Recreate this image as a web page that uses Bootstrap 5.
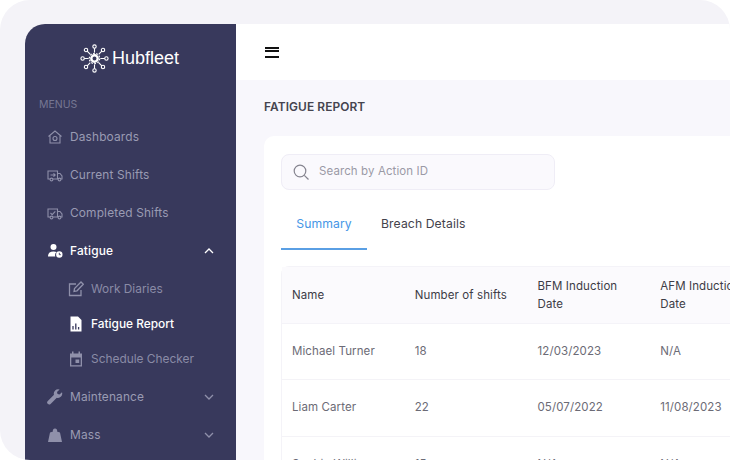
<!DOCTYPE html>
<html lang="en">
<head>
  <meta charset="UTF-8">
  <title>Hubfleet - Fatigue Report</title>
  <meta name="viewport" content="width=device-width, initial-scale=1">
  <link href="https://cdn.jsdelivr.net/npm/bootstrap@5.3.3/dist/css/bootstrap.min.css" rel="stylesheet">
  <style>
    html, body { height: 100%; overflow: hidden; background: #fff; }
    body { font-family: Inter, "Open Sans", sans-serif; }
    .frame-wrap { width: 730px; height: 460px; padding: 24px 0 0 25px; background: #f4f3f8; border-radius: 30px 30px 0 30px; overflow: hidden; }
    .app-shell { height: 600px; width: 705px; }
    .side-panel { width: 211px; flex: none; background: #38395c; border-radius: 20px 0 0 0; }
    .brand-row { height: 64px; padding-left: 55px; color: #fff; font-family: "Liberation Sans", Arial, sans-serif; font-size: 18px; gap: 3px; padding-top: 5px; }
    .menu-head { color: #767793; font-size: 10.5px; padding-left: 14px; height: 30px; line-height: 33px; margin-bottom: 0; }
    .side-link { height: 38px; padding-left: 22px; padding-right: 22px; color: #9a9bb3; font-size: 11.9px; letter-spacing: .15px; text-decoration: none; }
    .side-link svg.ico { width: 16px; height: 16px; margin-right: 7px; flex: none; }
    .side-link.is-open { color: #fff; font-weight: 500; }
    .sub-group { padding: 1px 0 2px; }
    .sub-link { height: 35px; padding-left: 43px; color: #8a8ba6; font-size: 11.9px; letter-spacing: 0; text-decoration: none; }
    .sub-link svg { width: 16px; height: 16px; margin-right: 7px; flex: none; }
    .sub-link.is-current { color: #fff; font-weight: 500; }
    .chev { width: 10px; height: 10px; margin-left: auto; }
    .main-area { flex: 1; min-width: 0; background: #f8f7fc; }
    .top-strip { height: 56px; background: #fff; padding-left: 29px; }
    .burger { width: 14px; height: 11px; border-top: 2px solid #111; border-bottom: 2px solid #111; }
    .burger::after { content: ""; display: block; height: 2px; background: #111; margin-top: 1.5px; }
    .page-body { padding: 0 0 0 28px; }
    .page-title { font-size: 11.9px; font-weight: 600; color: #45444f; height: 56px; line-height: 54px; margin: 0; letter-spacing: .1px; }
    .report-card { background: #fff; border-radius: 10px 0 0 0; padding: 18px 0 0 17px; border: 0; }
    .search-box { width: 274px; height: 36px; background: #faf9fd; border: 1px solid #efedf6; border-radius: 8px; padding-left: 11px; gap: 10px; color: #9a99a6; font-size: 11.5px; letter-spacing: .1px; }
    .tab-strip { height: 60px; }
    .tab-strip .nav-link { padding: 0; height: 60px; line-height: 68px; font-size: 12.2px; color: #43424c; letter-spacing: .1px; }
    .tab-strip .nav-link.active { width: 86px; text-align: center; color: #4596e6; border-bottom: 2px solid #5a9fe4; }
    .tab-strip .second-tab { margin-left: 14px; }
    .report-wrap { margin-top: 16px; width: 500px; border: 1px solid #f4f3f8; border-radius: 8px 0 0 0; }
    .report-table { margin: 0; table-layout: fixed; width: 491px; font-size: 11.5px; letter-spacing: .1px; }
    .report-table th, .report-table td { padding: 0 10px; vertical-align: middle; }
    .report-table th { height: 56px; background: #fbfafd; font-weight: 400; color: #3d3c46; line-height: 18px; border-bottom: 1px solid #f4f3f8; }
    .report-table td { height: 56.5px; color: #6c6b76; border-bottom: 1px solid #f4f3f7; }
  </style>
</head>
<body>
  <div class="frame-wrap">
    <div class="app-shell d-flex">
      <aside class="side-panel">
        <div class="brand-row d-flex align-items-center">
          <svg width="29" height="29" viewBox="0 0 29 29" fill="none" stroke="#fff" stroke-width="1.1">
            <circle cx="14.5" cy="14.5" r="3.2" stroke-width="2.4"/>
            <circle cx="14.5" cy="14.5" r="5.2" stroke-width="1.2" stroke-dasharray="1.8 1.4"/>
            <circle cx="14.5" cy="2.6" r="1.7"/><circle cx="14.5" cy="26.4" r="1.7"/>
            <circle cx="2.6" cy="14.5" r="1.7"/><circle cx="26.4" cy="14.5" r="1.7"/>
            <circle cx="6" cy="6" r="1.7"/><circle cx="23" cy="6" r="1.7"/>
            <circle cx="6" cy="23" r="1.7"/><circle cx="23" cy="23" r="1.7"/>
            <path d="M14.5 4.3V8.6M14.5 20.4V24.7M4.3 14.5H8.6M20.4 14.5H24.7M7.2 7.2L10.3 10.3M21.8 7.2L18.7 10.3M7.2 21.8L10.3 18.7M21.8 21.8L18.7 18.7"/>
          </svg>
          <span>Hubfleet</span>
        </div>
        <div class="menu-head">MENUS</div>

        <a class="side-link d-flex align-items-center" href="#">
          <svg class="ico" viewBox="0 0 16 16" fill="none" stroke="#8f90aa" stroke-width="1.1"><path d="M1.5 7.5L8 2l6.5 5.5M3 6.500V14h10V6.500"/><circle cx="8" cy="9.500" r="2"/></svg>
          Dashboards
        </a>
        <a class="side-link d-flex align-items-center" href="#">
          <svg class="ico" viewBox="0 0 16 16" fill="none" stroke="#8f90aa" stroke-width="1.1"><path d="M3 12H1V4h9.500v8H6M10.500 6.500h2.500l2 2.500v3h-1.200M10.500 12h.5"/><circle cx="4.500" cy="12.500" r="1.400"/><circle cx="12.500" cy="12.500" r="1.400"/><path d="M3.500 8h4.500M6.500 6.300L8.200 8 6.500 9.700"/></svg>
          Current Shifts
        </a>
        <a class="side-link d-flex align-items-center" href="#">
          <svg class="ico" viewBox="0 0 16 16" fill="none" stroke="#8f90aa" stroke-width="1.1"><path d="M3 12H1V4h9.500v8H6M10.500 6.500h2.500l2 2.500v3h-1.200M10.500 12h.5"/><circle cx="4.500" cy="12.500" r="1.400"/><circle cx="12.500" cy="12.500" r="1.400"/><path d="M3.500 8l1.700 1.700L8.300 6.300"/></svg>
          Completed Shifts
        </a>
        <a class="side-link is-open d-flex align-items-center" href="#">
          <svg class="ico" viewBox="0 0 16 16" fill="#fff"><circle cx="6.500" cy="4" r="3"/><path d="M1 13.500c0-3.500 2-5 5.500-5 1.300 0 2.300.2 3.100.6A4 4 0 0 0 8.300 13.500z"/><circle cx="12.300" cy="11.500" r="3.200"/><path d="M12.300 9.800v1.900h1.500" stroke="#38395c" stroke-width=".9" fill="none"/></svg>
          Fatigue
          <svg class="chev" viewBox="0 0 10 10" fill="none" stroke="#fff" stroke-width="1.3"><path d="M1 7l4-4 4 4"/></svg>
        </a>

        <div class="sub-group">
          <a class="sub-link d-flex align-items-center" href="#">
            <svg viewBox="0 0 16 16" fill="none" stroke="#8f90aa" stroke-width="1.3"><path d="M13 9v5.500H1.500V3H8"/><path d="M6 10.500l.5-3L13 1l2.300 2.300L9 9.800z"/></svg>
            Work Diaries
          </a>
          <a class="sub-link is-current d-flex align-items-center" href="#">
            <svg viewBox="0 0 16 16" fill="#fff"><path d="M2.500 .5h7.500L13.500 4v11.500h-11z"/><path d="M5 13.500V10M7.800 13.500V7.500M10.600 13.500v-2.500" stroke="#38395c" stroke-width="1.300"/></svg>
            Fatigue Report
          </a>
          <a class="sub-link d-flex align-items-center" href="#">
            <svg viewBox="0 0 16 16" fill="#8f90aa"><path d="M2 2.500h12v13H2zM3.300 6.500v7.700h9.400V6.500z" fill-rule="evenodd"/><path d="M4 .5h1.500v3H4zM10.500 .5H12v3h-1.500zM7.500 8.500h3.700v3.500H7.500z"/></svg>
            Schedule Checker
          </a>
        </div>

        <a class="side-link d-flex align-items-center" href="#">
          <svg class="ico" viewBox="0 0 16 16" fill="#8f90aa"><path d="M15 3.200l-2.500 2.300-2-.6-.5-2L12.600.5A4.300 4.300 0 0 0 7 5.800L.8 12a2 2 0 0 0 2.800 2.900L9.800 8.700A4.300 4.300 0 0 0 15 3.200z"/></svg>
          Maintenance
          <svg class="chev" viewBox="0 0 10 10" fill="none" stroke="#8f90aa" stroke-width="1.3"><path d="M1 3l4 4 4-4"/></svg>
        </a>
        <a class="side-link d-flex align-items-center" href="#">
          <svg class="ico" viewBox="0 0 16 16" fill="#8f90aa"><path d="M6 4.500A2.200 2.200 0 1 1 10 4.500L13 5.500L15 15H1L3 5.500z"/></svg>
          Mass
          <svg class="chev" viewBox="0 0 10 10" fill="none" stroke="#8f90aa" stroke-width="1.3"><path d="M1 3l4 4 4-4"/></svg>
        </a>
      </aside>

      <main class="main-area">
        <div class="top-strip d-flex align-items-center">
          <div class="burger"></div>
        </div>
        <div class="page-body">
          <h1 class="page-title">FATIGUE REPORT</h1>
          <div class="report-card">
            <div class="search-box d-flex align-items-center">
              <svg width="16" height="16" viewBox="0 0 16 16" fill="none" stroke="#85848f" stroke-width="1.2"><circle cx="7" cy="7" r="5.800"/><path d="M11.300 11.300L15.500 15.500"/></svg>
              <span>Search by Action ID</span>
            </div>
            <ul class="nav tab-strip">
              <li class="nav-item"><a class="nav-link active" href="#">Summary</a></li>
              <li class="nav-item"><a class="nav-link second-tab" href="#">Breach Details</a></li>
            </ul>
            <div class="report-wrap">
              <table class="table report-table">
                <thead>
                  <tr><th>Name</th><th>Number of shifts</th><th>BFM Induction Date</th><th>AFM Induction Date</th></tr>
                </thead>
                <tbody>
                  <tr><td>Michael Turner</td><td>18</td><td>12/03/2023</td><td>N/A</td></tr>
                  <tr><td>Liam Carter</td><td>22</td><td>05/07/2022</td><td>11/08/2023</td></tr>
                  <tr><td>Sophie Williams</td><td>15</td><td>N/A</td><td>N/A</td></tr>
                </tbody>
              </table>
            </div>
          </div>
        </div>
      </main>
    </div>
  </div>
</body>
</html>
